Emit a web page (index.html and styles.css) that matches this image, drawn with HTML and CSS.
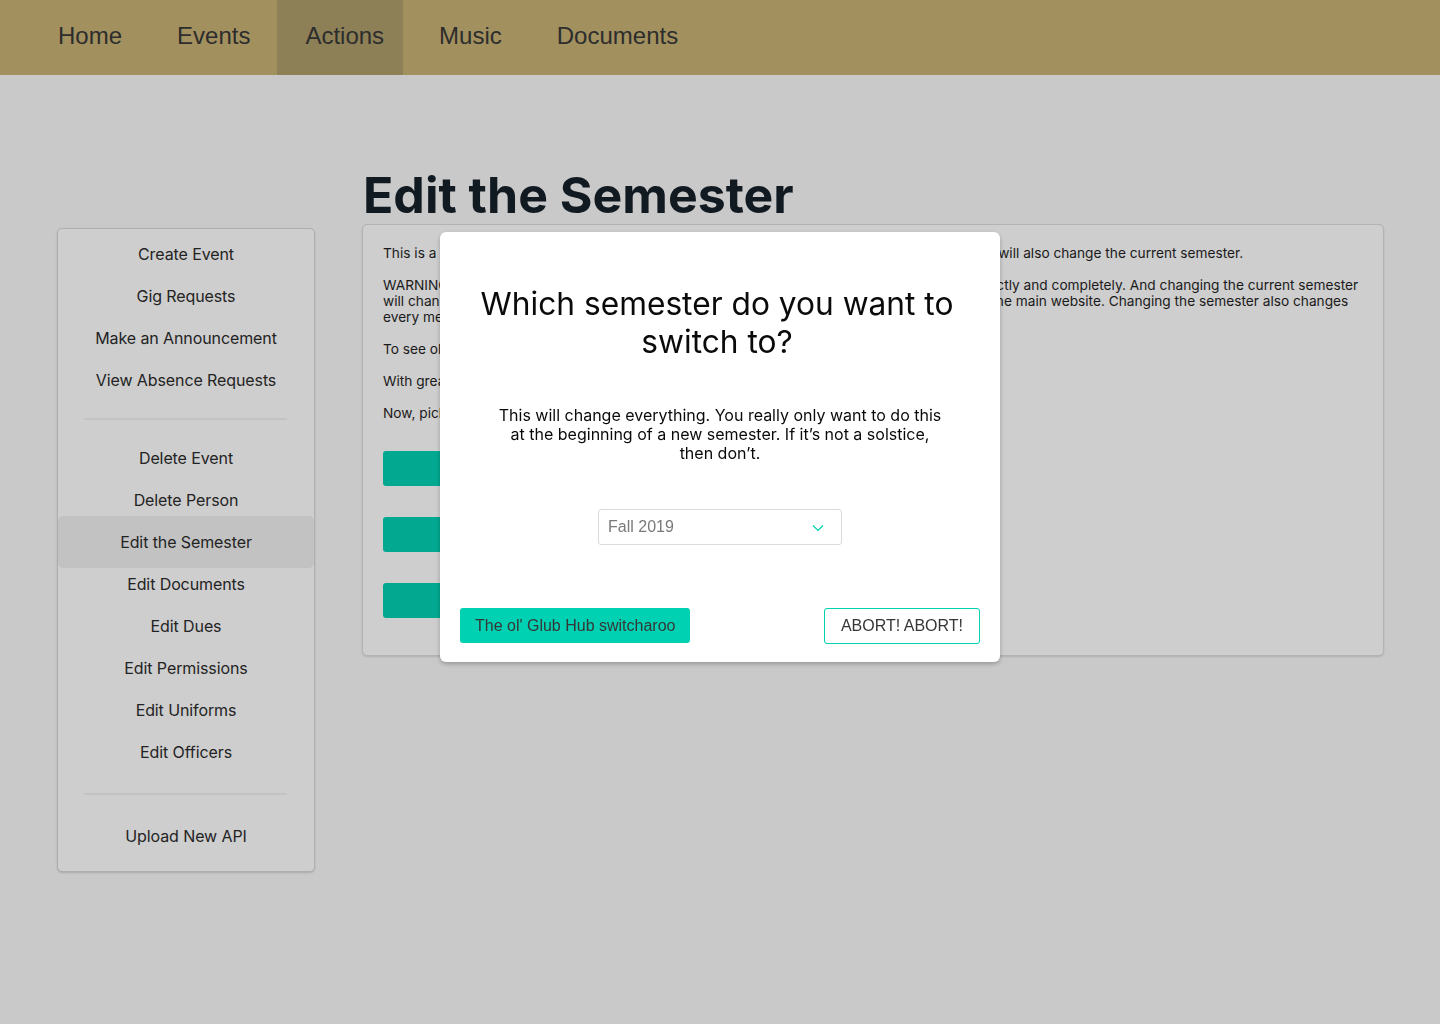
FILE: index.html
```html
<!DOCTYPE html>
<html lang="en">
<head>
<meta charset="utf-8">
<title>Edit the Semester</title>
<link rel="stylesheet" href="styles.css">
</head>
<body>
<nav class="navbar">
  <a class="nav-item">Home</a>
  <a class="nav-item">Events</a>
  <a class="nav-item is-active">Actions</a>
  <a class="nav-item">Music</a>
  <a class="nav-item">Documents</a>
</nav>

<div class="page">
  <aside class="sidebar">
    <a class="side-item">Create Event</a>
    <a class="side-item">Gig Requests</a>
    <a class="side-item">Make an Announcement</a>
    <a class="side-item">View Absence Requests</a>
    <hr class="side-divider first">
    <a class="side-item">Delete Event</a>
    <a class="side-item">Delete Person</a>
    <a class="side-item is-active">Edit the Semester</a>
    <a class="side-item">Edit Documents</a>
    <a class="side-item">Edit Dues</a>
    <a class="side-item">Edit Permissions</a>
    <a class="side-item">Edit Uniforms</a>
    <a class="side-item">Edit Officers</a>
    <hr class="side-divider second">
    <a class="side-item">Upload New API</a>
  </aside>

  <main class="main">
    <h1 class="title">Edit the Semester</h1>
    <section class="card">
      <p>This is a page for managing semesters. Creating a new semester or switching to any other one will also change the current semester.</p>
      <p>WARNING: changing the current semester affects the whole site for everyone immediately, directly and completely. And changing the current semester<br>will change what everyone sees on every page, including the events, dues and attendance on the main website. Changing the semester also changes<br>every member's status for the semester.</p>
      <p>To see old semesters, use the dropdown in the navbar.</p>
      <p>With great power comes great responsibility.</p>
      <p>Now, pick what you want to do:</p>
      <div class="card-buttons">
        <button class="teal-btn">Create a new semester</button>
        <button class="teal-btn">Change the current semester</button>
        <button class="teal-btn">Edit this semester</button>
      </div>
    </section>
  </main>
</div>

<div class="overlay"></div>

<div class="modal">
  <h2 class="modal-title">Which semester do you want to switch to?</h2>
  <p class="modal-text">This will change everything. You really only want to do this at the beginning of a new semester. If it’s not a solstice, then don’t.</p>
  <div class="select-wrap">
    <div class="select">
      <span class="select-value">Fall 2019</span>
      <svg class="chevron" width="12" height="8" viewBox="0 0 12 8"><path d="M1 1.5 L6 6.5 L11 1.5" fill="none" stroke="#00d1b2" stroke-width="1.2"/></svg>
    </div>
  </div>
  <div class="modal-actions">
    <button class="btn-primary">The ol' Glub Hub switcharoo</button>
    <button class="btn-outline">ABORT! ABORT!</button>
  </div>
</div>
</body>
</html>
```

FILE: styles.css
```css
* { box-sizing: border-box; }
html, body { margin: 0; padding: 0; }
body {
  width: 1440px;
  min-height: 1024px;
  background: #f9f9f9;
  font-family: Inter, "Noto Sans", sans-serif;
  color: #2a2a2a;
}

.navbar {
  height: 75px;
  background: #c9b275;
  display: flex;
  gap: 8px;
  padding-left: 30px;
}
.nav-item {
  display: flex;
  align-items: center;
  padding: 0 19px 3px 28px;
  font-family: "Liberation Sans", Arial, sans-serif;
  font-size: 24px;
  color: #363636;
  height: 75px;
}
.nav-item.is-active { background: #ae9e69; }

.page {
  display: flex;
  padding: 93px 56px 0 57px;
  gap: 47px;
  align-items: flex-start;
}

.sidebar {
  width: 258px;
  margin-top: 60px;
  background: #fff;
  border: 1px solid #d8d8d8;
  border-radius: 5px;
  box-shadow: 0 1px 2px rgba(0,0,0,0.15);
  padding: 4px 0 14px;
  display: flex;
  flex-direction: column;
}
.side-item {
  display: block;
  text-align: center;
  font-size: 16px;
  line-height: 24px;
  padding: 9px 0;
  color: #2a2a2a;
  letter-spacing: -0.1px;
}
.side-item.is-active {
  background: #f1f1f1;
  border-radius: 5px;
  padding: 14px 0;
  margin: -5px 0;
}
.side-divider {
  border: 0;
  height: 2px;
  background: #f2f2f2;
  margin: 17px 27px 17px 26px;
}
.side-divider.second { margin: 20px 27px 20px 26px; }

.main { flex: 1; }
.title {
  margin: 0 0 2px 1px;
  font-size: 50px;
  line-height: 54px;
  font-weight: 700;
  color: #131d27;
}
.card {
  background: #fff;
  border: 1px solid #dcdcdc;
  border-radius: 5px;
  box-shadow: 0 1px 2px rgba(0,0,0,0.12);
  padding: 20px 20px 37px;
  font-size: 13.7px;
  line-height: 16px;
  color: #1e1e1e;
}
.card p { margin: 0 0 16px; }
.card-buttons {
  display: flex;
  flex-direction: column;
  gap: 31px;
  align-items: flex-start;
  margin-top: 30px;
}
.teal-btn {
  background: #00d1b2;
  border: 0;
  border-radius: 3px;
  height: 35px;
  width: 420px;
  font-family: "Liberation Sans", Arial, sans-serif;
  font-size: 16px;
  color: #fff;
}

.overlay {
  position: fixed;
  inset: 0;
  background: rgba(10,10,10,0.2);
}

.modal {
  position: absolute;
  left: 440px;
  top: 232px;
  width: 560px;
  height: 430px;
  background: #fff;
  border-radius: 6px;
  box-shadow: 0 2px 4px rgba(0,0,0,0.25);
  padding: 53px 20px 18px;
  display: flex;
  flex-direction: column;
}
.modal-title {
  margin: 0 auto;
  width: 490px;
  text-align: center;
  font-weight: 400;
  font-size: 31.7px;
  line-height: 38px;
  color: #0a0a0a;
  position: relative;
  left: -3px;
}
.modal-text {
  margin: 45px auto 0;
  width: 450px;
  text-align: center;
  font-size: 16px;
  line-height: 19px;
  color: #0a0a0a;
}
.select-wrap {
  display: flex;
  justify-content: center;
  margin-top: 46px;
}
.select {
  width: 244px;
  height: 36px;
  border: 1px solid #dbdbdb;
  border-radius: 3px;
  display: flex;
  align-items: center;
  justify-content: space-between;
  padding: 0 17px 0 9px;
}
.select-value {
  font-family: "Liberation Sans", Arial, sans-serif;
  font-size: 16px;
  color: #7a7a7a;
}
.chevron { display: block; margin-top: 2px; }

.modal-actions {
  margin-top: auto;
  display: flex;
  justify-content: space-between;
  align-items: flex-start;
}
.btn-primary {
  background: #00d1b2;
  border: 0;
  border-radius: 3px;
  height: 35px;
  padding: 0 15px;
  font-family: "Liberation Sans", Arial, sans-serif;
  font-size: 16px;
  color: #363636;
}
.btn-outline {
  background: #fff;
  border: 1px solid #00d1b2;
  border-radius: 3px;
  height: 36px;
  padding: 0 16px;
  font-family: "Liberation Sans", Arial, sans-serif;
  font-size: 16px;
  color: #363636;
}
```
